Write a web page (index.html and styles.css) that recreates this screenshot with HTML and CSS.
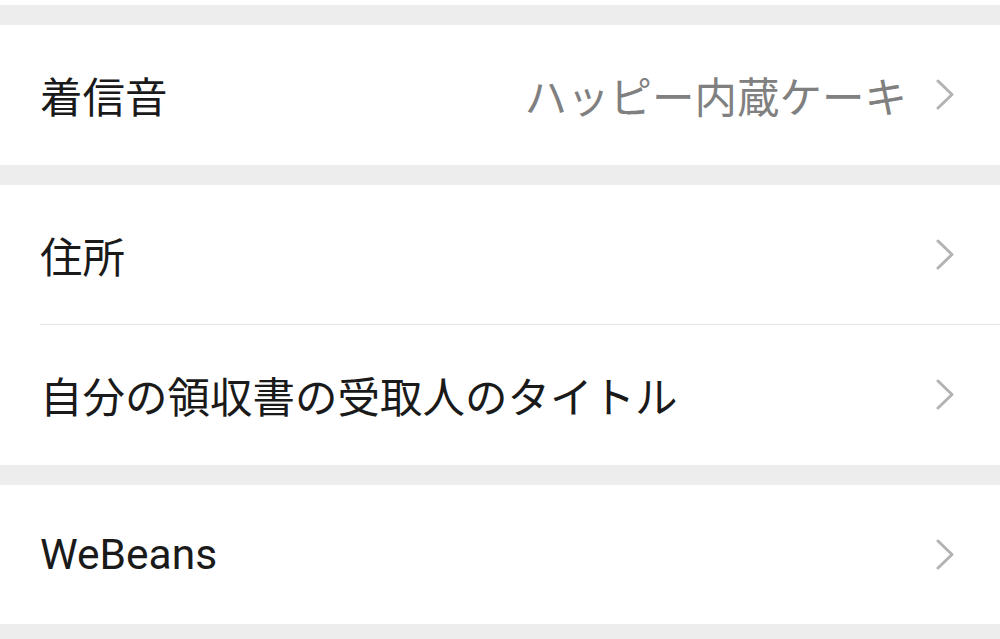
FILE: index.html
```html
<!DOCTYPE html>
<html lang="ja">
<head>
<meta charset="utf-8">
<link rel="stylesheet" href="styles.css">
</head>
<body>
<div class="page">
  <div class="top-strip"></div>
  <div class="group">
    <div class="row">
      <span class="label">着信音</span>
      <span class="value">ハッピー内蔵ケーキ</span>
      <svg class="chev" width="18" height="31" viewBox="0 0 18 31"><polyline points="2,2 16,15.5 2,29" fill="none" stroke="#b3b3b3" stroke-width="3" stroke-linecap="round" stroke-linejoin="round"/></svg>
    </div>
  </div>
  <div class="group">
    <div class="row">
      <span class="label">住所</span>
      <svg class="chev" width="18" height="31" viewBox="0 0 18 31"><polyline points="2,2 16,15.5 2,29" fill="none" stroke="#b3b3b3" stroke-width="3" stroke-linecap="round" stroke-linejoin="round"/></svg>
    </div>
    <div class="divider"></div>
    <div class="row">
      <span class="label">自分の領収書の受取人のタイトル</span>
      <svg class="chev" width="18" height="31" viewBox="0 0 18 31"><polyline points="2,2 16,15.5 2,29" fill="none" stroke="#b3b3b3" stroke-width="3" stroke-linecap="round" stroke-linejoin="round"/></svg>
    </div>
  </div>
  <div class="group">
    <div class="row">
      <span class="label">WeBeans</span>
      <svg class="chev" width="18" height="31" viewBox="0 0 18 31"><polyline points="2,2 16,15.5 2,29" fill="none" stroke="#b3b3b3" stroke-width="3" stroke-linecap="round" stroke-linejoin="round"/></svg>
    </div>
  </div>
</div>
</body>
</html>
```

FILE: styles.css
```css
html, body {
  margin: 0;
  padding: 0;
  background: #ededed;
}
.page {
  display: flex;
  flex-direction: column;
  gap: 20px;
  width: 1000px;
  height: 639px;
  overflow: hidden;
  font-family: Roboto, "Noto Sans CJK JP", sans-serif;
}
.top-strip {
  height: 5px;
  background: #ffffff;
}
.group {
  background: #ffffff;
  display: flex;
  flex-direction: column;
}
.row {
  height: 139.5px;
  display: flex;
  align-items: center;
  padding: 0 46px 0 40px;
  box-sizing: border-box;
}
.label {
  flex: 1;
  font-size: 42.5px;
  color: #1a1a1a;
  white-space: nowrap;
}
.value {
  font-size: 42.5px;
  color: #808080;
  margin-right: 29px;
  white-space: nowrap;
}
.chev {
  display: block;
  flex: none;
}
.divider {
  height: 1px;
  margin-left: 40px;
  background: #e6e6e6;
}
```
